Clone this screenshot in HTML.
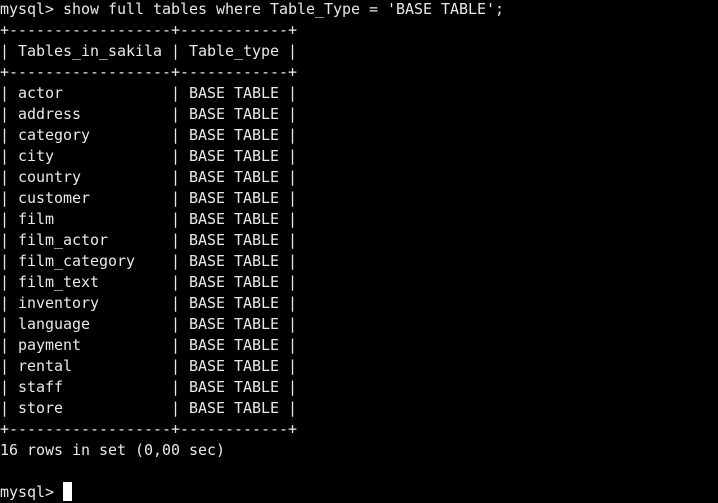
<!DOCTYPE html>
<html><head><meta charset="utf-8"><style>
html,body{margin:0;padding:0;background:#000;width:718px;height:503px;overflow:hidden}
pre{margin:0;position:absolute;left:0;top:-1px;font-family:"DejaVu Sans Mono","Liberation Mono",monospace;font-size:15px;line-height:21px;color:#e8e8e8;letter-spacing:-0.03px;white-space:pre}
.cur{display:inline-block;width:9px;height:19px;background:#fff;vertical-align:-4px}
</style></head><body><pre>mysql&gt; show full tables where Table_Type = 'BASE TABLE';
+------------------+------------+
| Tables_in_sakila | Table_type |
+------------------+------------+
| actor            | BASE TABLE |
| address          | BASE TABLE |
| category         | BASE TABLE |
| city             | BASE TABLE |
| country          | BASE TABLE |
| customer         | BASE TABLE |
| film             | BASE TABLE |
| film_actor       | BASE TABLE |
| film_category    | BASE TABLE |
| film_text        | BASE TABLE |
| inventory        | BASE TABLE |
| language         | BASE TABLE |
| payment          | BASE TABLE |
| rental           | BASE TABLE |
| staff            | BASE TABLE |
| store            | BASE TABLE |
+------------------+------------+
16 rows in set (0,00 sec)

mysql&gt; <span class="cur"></span></pre></body></html>
